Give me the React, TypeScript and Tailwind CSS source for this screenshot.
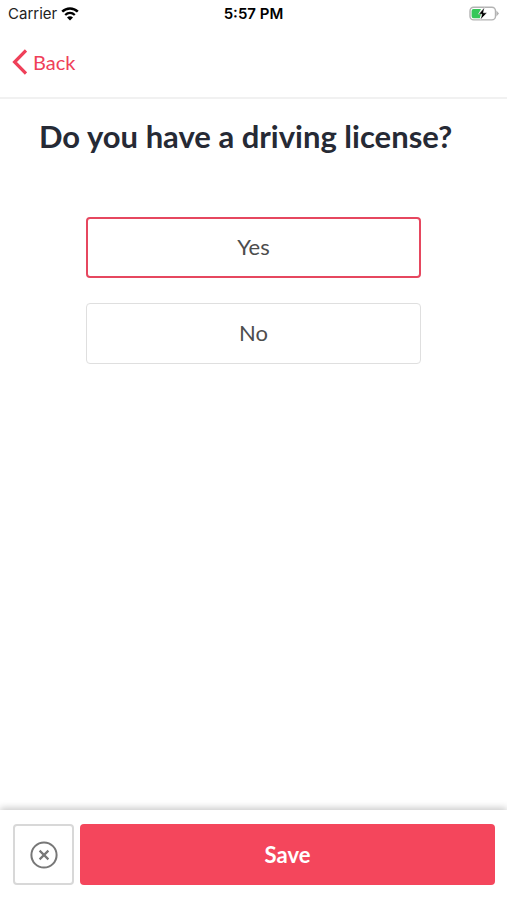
import { useState } from "react";

const answers = ["Yes", "No"];

function WifiIcon() {
  return (
    <svg width="18" height="14" viewBox="0 0 18 14" fill="none" aria-hidden="true">
      <path d="M1.2 4.7 C5.6 0.3 12.4 0.3 16.8 4.7" stroke="#000" strokeWidth="2.5" />
      <path d="M4.2 8 C7 5.3 11 5.3 13.8 8" stroke="#000" strokeWidth="2.3" />
      <path d="M9 13.4 L6 10.4 C7.7 8.9 10.3 8.9 12 10.4 Z" fill="#000" />
    </svg>
  );
}

function BatteryIcon() {
  return (
    <svg width="30" height="16" viewBox="0 0 30 16" fill="none" aria-hidden="true">
      <rect x="1" y="1.3" width="25.5" height="12.6" rx="3.6" stroke="#b3b3b3" strokeWidth="1.4" />
      <path d="M27.4 4.6 L30 7.6 L27.4 10.6 Z" fill="#b3b3b3" />
      <path d="M4.6 3 H12 L9.4 8 H12 L10.8 12.2 H4.6 A2 2 0 0 1 2.6 10.2 V5 A2 2 0 0 1 4.6 3 Z" fill="#35c759" />
      <path d="M15.4 1.6 L9.6 8.2 H12.9 L11.4 13.8 L18 6.8 H14.4 Z" fill="#000" stroke="#fff" strokeWidth="0.5" />
    </svg>
  );
}

export default function App() {
  const [answer, setAnswer] = useState("Yes");

  return (
    <div className="flex min-h-screen flex-col bg-white font-['Lato',sans-serif]">
      <div className="grid h-7 grid-cols-3 items-center px-2 font-['Inter',sans-serif] text-[15px] text-black">
        <div className="flex items-center gap-1 text-[#222]">
          <span>Carrier</span>
          <WifiIcon />
        </div>
        <span className="text-center font-semibold">5:57 PM</span>
        <div className="flex justify-end">
          <BatteryIcon />
        </div>
      </div>

      <header className="flex h-[71px] items-center border-b-2 border-[#f1f1f1] px-3 pb-0.5">
        <button type="button" className="flex items-center gap-1.5 text-xl text-[#ef4059]">
          <svg width="15" height="26" viewBox="0 0 15 26" fill="none" aria-hidden="true">
            <path d="M14 1.5 L2.6 13 L14 24.5" stroke="currentColor" strokeWidth="3.2" />
          </svg>
          Back
        </button>
      </header>

      <main className="flex-1 px-5 pt-[19px]">
        <h1 className="px-[19px] text-[31px] leading-9 font-bold text-[#262a35]">Do you have a driving license?</h1>
        <div className="mt-[63px] flex flex-col gap-[25px] px-[66px]">
          {answers.map((label) => (
            <button
              key={label}
              type="button"
              aria-pressed={answer === label}
              onClick={() => setAnswer(label)}
              className={
                answer === label
                  ? "h-[61px] rounded border-2 border-[#e6475f] pb-0.5 text-[22px] text-[#4d4d4d]"
                  : "h-[61px] rounded border border-[#dfdfdf] pb-0.5 text-[22px] text-[#4d4d4d]"
              }
            >
              {label}
            </button>
          ))}
        </div>
      </main>

      <footer className="flex gap-1.5 bg-white pt-3.5 pr-3 pb-[15px] pl-[13px] shadow-[0_-2px_7px_rgba(0,0,0,0.22)]">
        <button
          type="button"
          aria-label="Clear answer"
          onClick={() => setAnswer("")}
          className="flex h-[61px] w-[61px] items-center justify-center rounded border-2 border-[#d8d8d8] text-[#777]"
        >
          <svg width="28" height="28" viewBox="0 0 28 28" fill="none" stroke="currentColor" aria-hidden="true">
            <circle cx="14" cy="14" r="12.6" strokeWidth="2" />
            <path d="M9.6 9.6 L18.4 18.4 M18.4 9.6 L9.6 18.4" strokeWidth="2.2" />
          </svg>
        </button>
        <button type="button" className="h-[61px] flex-1 rounded bg-[#f4465c] text-[22px] font-bold text-white">
          Save
        </button>
      </footer>
    </div>
  );
}
